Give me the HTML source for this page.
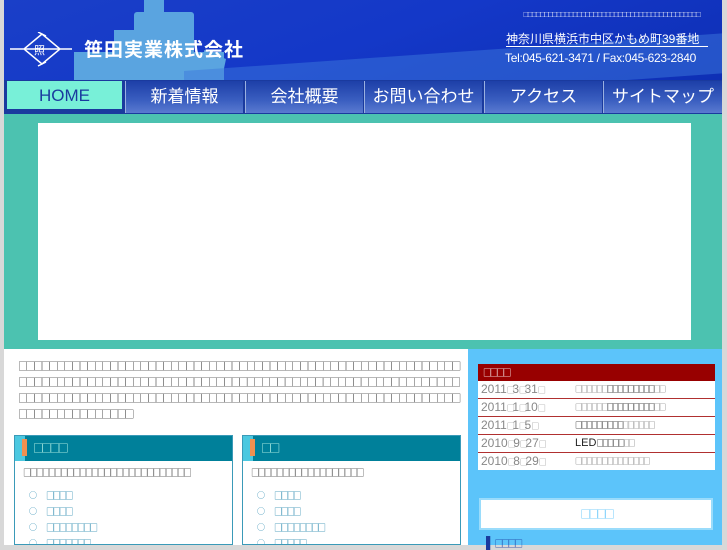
<!DOCTYPE html>
<html><head><meta charset="utf-8">
<style>
*{margin:0;padding:0;box-sizing:border-box}
body{width:727px;height:545px;overflow:hidden;background:#d8d8d8;font-family:"Liberation Sans","Noto Sans CJK JP",sans-serif;position:relative}
#wrap{position:absolute;left:4px;top:0;width:718px;height:545px;background:#fff}
#hdr{position:absolute;left:0;top:0;width:718px;height:80px;background:linear-gradient(160deg,#1a3fc8 0%,#1438c8 50%,#0e2fb5 100%);overflow:hidden}
.ship{position:absolute;background:#5aa4e0}
#nav{position:absolute;left:0;top:80px;width:718px;height:34px;background:#1a3a9e}
.nb{position:absolute;top:1px;height:32px;color:#fff;font-size:17px;text-align:center;line-height:32px;background:linear-gradient(#1d3fa8,#3a5ec0 60%,#5a7ad0);border-left:1px solid #9ab0e0}
#band{position:absolute;left:0;top:114px;width:718px;height:235px;background:#4cc2b0}
#slide{position:absolute;left:34px;top:9px;width:653px;height:217px;background:#fff}
#side{position:absolute;left:464px;top:349px;width:254px;height:196px;background:#5cc4fa}
.t{font-family:"Noto Sans CJK JP",sans-serif;word-break:break-all;white-space:normal}
.box{color:#444}
.panel{position:absolute;top:435px;height:110px;border:1px solid #3a9ab8;background:#fff;overflow:hidden}
.ph{height:25px;background:#00809a;color:#cfe;line-height:25px;padding-left:18px;position:relative}
.ph:before{content:"";position:absolute;left:0;top:0;width:10px;height:25px;background:#4cc8e0}
.ph:after{content:"";position:absolute;left:7px;top:3px;width:5px;height:17px;background:#f09050}
ul{list-style:none;padding-left:14px;color:#2a8ab0;line-height:16px}
ul li:before{content:"○";font-size:8px;margin-right:9px;vertical-align:1px;letter-spacing:0}
.r{height:18px;line-height:17px;border-bottom:1px solid #b03030;padding-left:3px;position:relative;color:#888;font-size:12px;white-space:nowrap}
.r .t{position:absolute;left:97px;top:0;color:#666;font-size:8px;letter-spacing:-2.8px}
.s{font-size:8px;letter-spacing:-2.5px;font-family:"Noto Sans CJK JP",sans-serif}
</style></head><body>
<div id="wrap">
<div id="hdr">
 <div class="ship" style="left:140px;top:0;width:20px;height:15px"></div>
 <div class="ship" style="left:130px;top:12px;width:60px;height:30px;border-radius:3px"></div>
 <div class="ship" style="left:110px;top:30px;width:80px;height:50px"></div>
 <div class="ship" style="left:70px;top:52px;width:150px;height:28px"></div>
 <div class="ship" style="left:200px;top:50px;width:22px;height:30px;clip-path:polygon(0 0,100% 30%,80% 100%,0 100%)"></div>
 <div style="position:absolute;left:180px;top:50px;width:600px;height:40px;background:rgba(60,120,220,.5);transform:skewY(-4deg)"></div>
 <svg style="position:absolute;left:4px;top:32px" width="68" height="38" viewBox="0 0 68 38"><path d="M2 17H64M34 2 52 17 34 32 16 17Z M30 0 38 4M30 34 38 30" stroke="#fff" stroke-width="1.5" fill="#1a3fc8"/><text x="26" y="22" fill="#fff" font-size="11" font-family="Noto Sans CJK JP">照</text></svg>
 <div style="position:absolute;left:80px;top:35px;color:#fff;font-size:19px;font-weight:bold;letter-spacing:1px">笹田実業株式会社</div>
 <div class="t" style="position:absolute;left:519px;top:10px;width:200px;color:#fff;font-size:6px;letter-spacing:-1.9px;white-space:nowrap">□□□□□□□□□□□□□□□□□□□□□□□□□□□□□□□□□□□□□□□□□□□</div>
 <div style="position:absolute;left:502px;top:30px;color:#fff;font-size:12px">神奈川県横浜市中区かもめ町39番地</div>
 <div style="position:absolute;left:502px;top:46px;width:202px;height:1px;background:#fff"></div>
 <div style="position:absolute;left:501px;top:51px;color:#fff;font-size:12px;letter-spacing:-.3px">Tel:045-621-3471 / Fax:045-623-2840</div>
</div>
<div id="nav">
 <div class="nb" style="left:3px;width:115px;background:#78f0d8;color:#1a3a9e;border:none;height:28px;line-height:30px">HOME</div>
 <div class="nb" style="left:121px;width:118px">新着情報</div>
 <div class="nb" style="left:241px;width:118px">会社概要</div>
 <div class="nb" style="left:360px;width:118px">お問い合わせ</div>
 <div class="nb" style="left:480px;width:118px">アクセス</div>
 <div class="nb" style="left:599px;width:119px">サイトマップ</div>
</div>
<div id="band"><div id="slide"></div></div>
<div class="box t" style="position:absolute;left:14px;top:358px;width:442px;line-height:16px;font-size:10px;letter-spacing:-2.4px">□□□□□□□□□□□□□□□□□□□□□□□□□□□□□□□□□□□□□□□□□□□□□□□□□□□□□□□□□□□□□□□□□□□□□□□□□□□□□□□□□□□□□□□□ □□□□□□□□□□□□□□□□□□□□□□□□□□□□□□□□□□□□□□□□□□□□□□□□□□□□□□□□□□□□□□□□□□□□□□□□□□□□□□□□□□□□□□□□□□□□□□□□□□□□□</div>
<div class="panel" style="left:10px;width:219px"><div class="ph t" style="font-size:11px;letter-spacing:-2.8px">□□□□</div>
 <div class="box t" style="padding:5px 8px 8px;font-size:9px;letter-spacing:-2.85px;line-height:14px">□□□□□□□□□□□□□□□□□□□□□□□□□□□</div>
 <ul class="t" style="font-size:9px;letter-spacing:-2.85px"><li>□□□□</li><li>□□□□</li><li>□□□□□□□□</li><li>□□□□□□□</li></ul></div>
<div class="panel" style="left:238px;width:219px"><div class="ph t" style="font-size:11px;letter-spacing:-2.8px">□□</div>
 <div class="box t" style="padding:5px 8px 8px;font-size:9px;letter-spacing:-2.85px;line-height:14px">□□□□□□□□□□□□□□□□□□</div>
 <ul class="t" style="font-size:9px;letter-spacing:-2.85px"><li>□□□□</li><li>□□□□</li><li>□□□□□□□□</li><li>□□□□□</li></ul></div>
<div id="side">
 <div style="position:absolute;left:10px;top:15px;width:237px;background:#fff">
  <div class="t" style="background:#980000;color:#fff;font-size:9px;letter-spacing:-2.5px;height:17px;line-height:17px;padding-left:5px">□□□□</div>
  <div class="r">2011<span class="s">□</span>3<span class="s">□</span>31<span class="s">□</span><span class="t">□□□□□□<b style="color:#222">□□□□□□□□□</b>□□</span></div>
  <div class="r">2011<span class="s">□</span>1<span class="s">□</span>10<span class="s">□</span><span class="t">□□□□□□<b style="color:#222">□□□□□□□□□</b>□□</span></div>
  <div class="r">2011<span class="s">□</span>1<span class="s">□</span>5<span class="s">□</span><span class="t"><b style="color:#222">□□□□□□□□□</b>□□□□□□</span></div>
  <div class="r">2010<span class="s">□</span>9<span class="s">□</span>27<span class="s">□</span><span class="t"><span style="font-family:'Liberation Sans';letter-spacing:0;font-size:11px;color:#222">LED</span><b style="color:#222">□□□□□</b>□□</span></div>
  <div class="r" style="border:none;height:17px">2010<span class="s">□</span>8<span class="s">□</span>29<span class="s">□</span><span class="t">□□□□□□□□□□□□□□</span></div>
 </div>
 <div class="t" style="position:absolute;left:11px;top:149px;width:234px;height:32px;background:#fff;border:2px solid #9adcfb;color:#5cc4fa;font-size:11px;letter-spacing:-3.2px;text-align:center;line-height:28px">□□□□</div>
 <div style="position:absolute;left:18px;top:187px;font-size:12px;color:#1a3a9e">▌<span class="t" style="font-size:9px;letter-spacing:-2.5px">□□□□</span></div>
</div>
</div>
</body></html>
